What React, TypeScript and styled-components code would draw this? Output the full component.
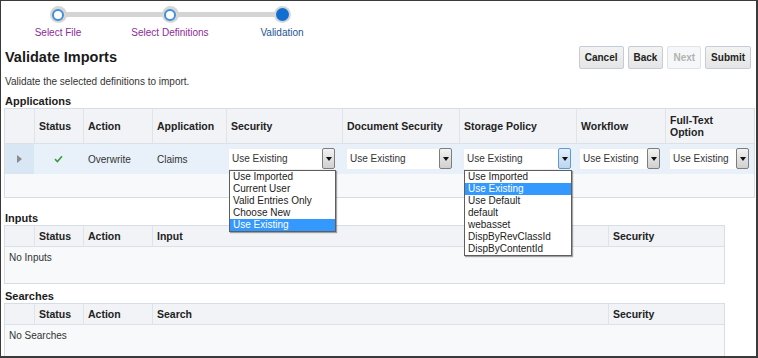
import styled, { createGlobalStyle, css } from "styled-components";

const GlobalStyle = createGlobalStyle`
  html, body {
    margin: 0;
    padding: 0;
    background: #fff;
  }
  body {
    font-family: "Liberation Sans", Arial, sans-serif;
  }
  * {
    box-sizing: border-box;
  }
`;

const Frame = styled.div`
  width: 758px;
  height: 358px;
  overflow: hidden;
  background: #fff;
  border-style: solid;
  border-color: #3a3a3a;
  border-width: 1px 2px 2px 1px;
  display: flex;
  flex-direction: column;
`;

/* ---------- train ---------- */

const Train = styled.ol`
  display: flex;
  height: 39px;
  margin: 0;
  padding: 5px 0 0 1px;
  list-style: none;
`;

const Stop = styled.li<{ $first?: boolean }>`
  position: relative;
  width: 112px;
  display: flex;
  flex-direction: column;
  align-items: center;

  ${(p) =>
    !p.$first &&
    css`
      &::before {
        content: "";
        position: absolute;
        top: 6px;
        right: 50%;
        width: 112px;
        height: 5px;
        background: #d4d4d4;
      }
    `}
`;

const Dot = styled.span`
  position: relative;
  z-index: 1;
  width: 17px;
  height: 17px;
  border-radius: 50%;
  background: #d6d6d6;
  display: flex;
  align-items: center;
  justify-content: center;
`;

const DotInner = styled.span<{ $current?: boolean }>`
  border-radius: 50%;
  ${(p) =>
    p.$current
      ? css`
          width: 13px;
          height: 13px;
          background: #1170cf;
        `
      : css`
          width: 12px;
          height: 12px;
          background: #fff;
          border: 2px solid #3f8fe0;
        `}
`;

const StopLabel = styled.span<{ $current?: boolean }>`
  margin-top: 4px;
  font-size: 10px;
  line-height: 12px;
  white-space: nowrap;
  color: ${(p) => (p.$current ? "#1d5592" : "#8b2b98")};
`;

/* ---------- page header ---------- */

const HeaderRow = styled.div`
  margin-top: 7px;
  height: 23px;
  padding: 0 5px 0 4px;
  display: flex;
  align-items: center;
  justify-content: space-between;
`;

const Title = styled.h1`
  margin: 0;
  font-size: 14.5px;
  line-height: 17px;
  font-weight: bold;
  color: #1a1a1a;
`;

const Buttons = styled.div`
  display: flex;
  gap: 4px;
`;

const Button = styled.button`
  height: 23px;
  padding: 0 5px;
  font-family: inherit;
  font-size: 10px;
  font-weight: bold;
  color: #222;
  background: linear-gradient(#f3f3f3, #e5e5e5);
  border: 1px solid #c4ccd6;
  border-radius: 2px;

  &:disabled {
    color: #b2b2b2;
    background: #f6f7f8;
    border-color: #dfe3e8;
  }
`;

const Subtitle = styled.p`
  margin: 7px 0 0;
  padding-left: 4px;
  font-size: 10px;
  line-height: 12px;
  color: #333;
`;

/* ---------- tables ---------- */

const SectionLabel = styled.h2<{ $top: number }>`
  margin: ${(p) => p.$top}px 0 0;
  padding-left: 4px;
  font-size: 11px;
  line-height: 13px;
  font-weight: bold;
  color: #1b1b1b;
`;

const Grid = styled.div<{ $cols: string }>`
  display: grid;
  grid-template-columns: ${(p) => p.$cols};
  width: max-content;
  margin-left: 3px;
  border: 1px solid #d6dde4;
`;

const HeadCell = styled.div<{ $h: number; $first?: boolean }>`
  height: ${(p) => p.$h}px;
  display: flex;
  align-items: center;
  padding: 0 4px;
  background: #f1f3f6;
  border-left: ${(p) => (p.$first ? "none" : "1px solid #dfe4ea")};
  border-bottom: 1px solid #dbe1e7;
  font-size: 10.5px;
  line-height: 12.5px;
  font-weight: bold;
  color: #222;
`;

const DataCell = styled.div<{ $pad?: number; $center?: boolean }>`
  position: relative;
  height: 30px;
  display: flex;
  align-items: center;
  justify-content: ${(p) => (p.$center ? "center" : "flex-start")};
  padding-left: ${(p) => p.$pad ?? 5}px;
  background: #e8f1fa;
  font-size: 10px;
  color: #333;
`;

const ExpanderCell = styled.div`
  height: 30px;
  display: flex;
  align-items: center;
  justify-content: center;
  background: #d9e6f4;
`;

const Disclosure = styled.span`
  width: 0;
  height: 0;
  border-left: 5px solid #8a8a8a;
  border-top: 4px solid transparent;
  border-bottom: 4px solid transparent;
`;

const EmptyBody = styled.div<{ $h: number }>`
  grid-column: 1 / -1;
  height: ${(p) => p.$h}px;
  padding: 5px 4px;
  background: #f7f9fb;
  font-size: 10px;
  line-height: 12px;
  color: #333;
`;

/* ---------- choice list ---------- */

const Select = styled.div<{ $w: number }>`
  position: relative;
  width: ${(p) => p.$w}px;
  height: 22px;
  display: flex;
  background: #fff;
  border: 1px solid #eceef0;
  border-right: none;
`;

const SelectValue = styled.span`
  flex: 1;
  padding-left: 3px;
  font-size: 10px;
  line-height: 20px;
  color: #333;
  white-space: nowrap;
  overflow: hidden;
`;

const SelectButton = styled.span<{ $active?: boolean }>`
  width: 13px;
  height: 21px;
  margin-top: -1px;
  display: flex;
  align-items: center;
  justify-content: center;
  border-radius: 2px;
  border: 1px solid ${(p) => (p.$active ? "#5b9bd5" : "#7d7d7d")};
  background: ${(p) =>
    p.$active
      ? "linear-gradient(#e6f0fb, #bcd5ef)"
      : "linear-gradient(#f2f2f2, #d0d0d0)"};

  &::after {
    content: "";
    width: 0;
    height: 0;
    border-top: 4px solid #111;
    border-left: 3.5px solid transparent;
    border-right: 3.5px solid transparent;
  }
`;

const ListBox = styled.ul`
  position: absolute;
  z-index: 10;
  top: 21px;
  left: 0;
  right: -1px;
  margin: 0;
  padding: 0;
  list-style: none;
  background: #fff;
  border: 1px solid #5e5e5e;
  box-shadow: 1px 1px 1px rgba(0, 0, 0, 0.35);
`;

const Option = styled.li<{ $selected?: boolean }>`
  height: 12px;
  padding: 0 3px;
  font-size: 10px;
  line-height: 12px;
  white-space: nowrap;
  color: ${(p) => (p.$selected ? "#fff" : "#222")};
  background: ${(p) => (p.$selected ? "#3399ff" : "transparent")};
`;

type Col = { label: string; w: number };

const appCols: Col[] = [
  { label: "", w: 29 },
  { label: "Status", w: 49 },
  { label: "Action", w: 69 },
  { label: "Application", w: 74 },
  { label: "Security", w: 116 },
  { label: "Document Security", w: 117 },
  { label: "Storage Policy", w: 117 },
  { label: "Workflow", w: 89 },
  { label: "Full-Text Option", w: 89 },
];

const inputCols: Col[] = [
  { label: "", w: 29 },
  { label: "Status", w: 49 },
  { label: "Action", w: 69 },
  { label: "Input", w: 456 },
  { label: "Security", w: 116 },
];

const searchCols: Col[] = inputCols.map((c) =>
  c.label === "Input" ? { ...c, label: "Search" } : c
);

const template = (cols: Col[]) => cols.map((c) => `${c.w}px`).join(" ");

type Choice = {
  pad: number;
  width: number;
  active?: boolean;
  options?: string[];
  selected?: string;
};

const choices: Choice[] = [
  {
    pad: 2,
    width: 107,
    options: ["Use Imported", "Current User", "Valid Entries Only", "Choose New", "Use Existing"],
    selected: "Use Existing",
  },
  { pad: 4, width: 106 },
  {
    pad: 4,
    width: 108,
    active: true,
    options: [
      "Use Imported",
      "Use Existing",
      "Use Default",
      "default",
      "webasset",
      "DispByRevClassId",
      "DispByContentId",
    ],
    selected: "Use Existing",
  },
  { pad: 3, width: 81 },
  { pad: 4, width: 80 },
];

function Check() {
  return (
    <svg width="9" height="8" viewBox="0 0 9 8">
      <polyline
        points="1,4.2 3.4,6.5 8,1.2"
        fill="none"
        stroke="#3d9a3d"
        strokeWidth="1.6"
      />
    </svg>
  );
}

function Head({ cols, h }: { cols: Col[]; h: number }) {
  return (
    <>
      {cols.map((c, i) => (
        <HeadCell key={i} $h={h} $first={i === 0}>
          {c.label === "Full-Text Option" ? (
            <span>
              Full-Text
              <br />
              Option
            </span>
          ) : (
            c.label
          )}
        </HeadCell>
      ))}
    </>
  );
}

const steps = ["Select File", "Select Definitions", "Validation"];

export default function App() {
  return (
    <>
      <GlobalStyle />
      <Frame>
        <Train>
          {steps.map((s, i) => {
            const current = i === steps.length - 1;
            return (
              <Stop key={s} $first={i === 0}>
                <Dot>
                  <DotInner $current={current} />
                </Dot>
                <StopLabel $current={current}>{s}</StopLabel>
              </Stop>
            );
          })}
        </Train>

        <HeaderRow>
          <Title>Validate Imports</Title>
          <Buttons>
            <Button>Cancel</Button>
            <Button>Back</Button>
            <Button disabled>Next</Button>
            <Button>Submit</Button>
          </Buttons>
        </HeaderRow>
        <Subtitle>Validate the selected definitions to import.</Subtitle>

        <SectionLabel $top={7}>Applications</SectionLabel>
        <Grid $cols={template(appCols)}>
          <Head cols={appCols} h={35} />
          <ExpanderCell>
            <Disclosure />
          </ExpanderCell>
          <DataCell $center $pad={0}>
            <Check />
          </DataCell>
          <DataCell>Overwrite</DataCell>
          <DataCell>Claims</DataCell>
          {choices.map((c, i) => (
            <DataCell key={i} $pad={c.pad}>
              <Select $w={c.width}>
                <SelectValue>Use Existing</SelectValue>
                <SelectButton $active={c.active} />
                {c.options && (
                  <ListBox>
                    {c.options.map((o) => (
                      <Option key={o} $selected={o === c.selected}>
                        {o}
                      </Option>
                    ))}
                  </ListBox>
                )}
              </Select>
            </DataCell>
          ))}
          <EmptyBody $h={23} />
        </Grid>

        <SectionLabel $top={14}>Inputs</SectionLabel>
        <Grid $cols={template(inputCols)}>
          <Head cols={inputCols} h={21} />
          <EmptyBody $h={36}>No Inputs</EmptyBody>
        </Grid>

        <SectionLabel $top={6}>Searches</SectionLabel>
        <Grid $cols={template(searchCols)}>
          <Head cols={searchCols} h={21} />
          <EmptyBody $h={40}>No Searches</EmptyBody>
        </Grid>
      </Frame>
    </>
  );
}
